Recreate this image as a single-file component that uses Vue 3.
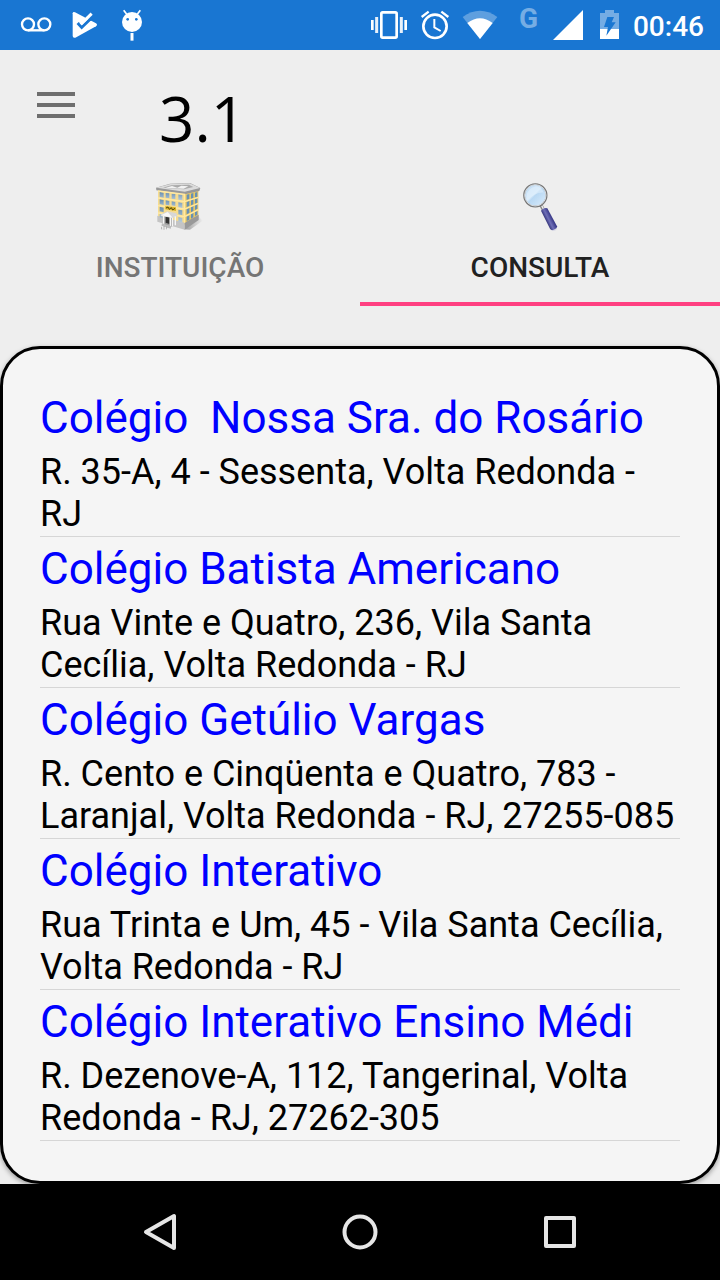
<script setup>
import { ref } from 'vue'

const active = ref('consulta')

const schools = [
  { name: 'Colégio  Nossa Sra. do Rosário', address: 'R. 35-A, 4 - Sessenta, Volta Redonda - RJ' },
  { name: 'Colégio Batista Americano', address: 'Rua Vinte e Quatro, 236, Vila Santa Cecília, Volta Redonda - RJ' },
  { name: 'Colégio Getúlio Vargas', address: 'R. Cento e Cinqüenta e Quatro, 783 - Laranjal, Volta Redonda - RJ, 27255-085' },
  { name: 'Colégio Interativo', address: 'Rua Trinta e Um, 45 - Vila Santa Cecília, Volta Redonda - RJ' },
  { name: 'Colégio Interativo Ensino Médi', address: 'R. Dezenove-A, 112, Tangerinal, Volta Redonda - RJ, 27262-305' },
]
</script>

<template>
  <div class="screen">
    <div class="status">
      <div class="notices">
        <svg width="32" height="50" viewBox="60 0 96 150" fill="none" stroke="#fff" stroke-width="7">
          <circle cx="84" cy="73" r="18" />
          <circle cx="133" cy="73" r="18" />
          <path d="M84 91H133" />
        </svg>
        <svg width="26" height="50" viewBox="216 0 78 150">
          <path d="M218 40Q219 34 225 37L288 70Q294 75 288 79L226 113Q218 115 218 107Z" fill="#fff" />
          <path d="M253 50L264 40L292 48L272 63Z" fill="#1976d2" />
          <path d="M233 69L245 82L275 53" fill="none" stroke="#1976d2" stroke-width="9" />
          <path d="M242 73L275 41" fill="none" stroke="#fff" stroke-width="9" />
        </svg>
        <svg width="28" height="50" viewBox="354 0 84 150">
          <circle cx="396" cy="66" r="30" fill="#fff" />
          <path d="M371 31L382 45M421 31L410 45" stroke="#fff" stroke-width="5" />
          <path d="M396 99V122" stroke="#fff" stroke-width="9" />
          <circle cx="383" cy="58" r="4" fill="#1976d2" />
          <circle cx="409" cy="58" r="4" fill="#1976d2" />
        </svg>
      </div>
      <div class="system">
        <svg width="37" height="50" viewBox="33 0 111 150">
          <rect x="64" y="37" width="46" height="76" rx="4" fill="none" stroke="#fff" stroke-width="8" />
          <path d="M37 60V90M137 60V90" stroke="#fff" stroke-width="8" />
          <path d="M50 51V99M124 51V99" stroke="#fff" stroke-width="9" opacity=".9" />
        </svg>
        <svg width="30" height="50" viewBox="180 0 90 150" fill="none" stroke="#fff">
          <circle cx="225" cy="79" r="35" stroke-width="8" />
          <path d="M223 57V82L242 93" stroke-width="6" />
          <path d="M185 51L206 35M265 51L244 35" stroke-width="7" />
        </svg>
        <svg width="36" height="50" viewBox="306 0 108 150" fill="#fff">
          <path d="M308 51Q360 14 412 51L360 117Z" opacity=".3" />
          <path d="M322 69Q360 41 398 69L360 117Z" />
        </svg>
        <span class="network">G</span>
        <svg width="30" height="50" viewBox="39 0 90 150"><path d="M39 120L129 30V120Z" fill="#fff" /></svg>
        <svg width="26" height="50" viewBox="165 0 78 150">
          <path d="M180 39H195V30H222V39H237V87H180Z" fill="#fff" opacity=".4" />
          <path d="M180 87H237V117H180Z" fill="#fff" />
          <path d="M202 51H222L215 67H227L199 107L204 81H192Z" fill="#1976d2" />
        </svg>
        <time class="clock">00:46</time>
      </div>
    </div>

    <header class="bar">
      <button class="menu" type="button" aria-label="Menu"><i></i><i></i><i></i></button>
      <h1>3.1</h1>
    </header>

    <nav class="tabs">
      <button type="button" class="tab" :class="{ on: active === 'instituicao' }" @click="active = 'instituicao'">
        <svg width="80" height="70" viewBox="0 0 240 210">
          <defs>
            <linearGradient id="shade"><stop offset="0" stop-color="#999" /><stop offset="1" stop-color="#ededed" /></linearGradient>
            <linearGradient id="glass" x2="0" y2="1"><stop offset="0" stop-color="#688eaf" /><stop offset="1" stop-color="#b6cbdc" /></linearGradient>
          </defs>
          <path d="M132 178L176 140L188 152L150 179Z" fill="url(#shade)" />
          <path d="M54 60L134 70V165L54 143Z" fill="#f6dc90" />
          <path d="M134 70L175 62V142L134 166Z" fill="#e8c866" />
          <path d="M52 137L134 158V179L52 155Z" fill="#c4c4c4" />
          <path d="M134 158L176 134V150L134 179Z" fill="#999" />
          <path d="M48 53L90 41L150 39L181 54L178 63L134 73L49 61Z" fill="#989898" />
          <path d="M49 53L91 42L149 40L180 54L134 65Z" fill="#dcdcdc" />
          <path d="M69 53L94 46L147 44L160 51L132 58Z" fill="#aaa" />
          <path d="M76 53L96 48L112 53L124 47L145 49L131 56Z" fill="#f2f2f2" />
          <g fill="url(#glass)">
            <path d="M59 66L71 68V83L59 81ZM77 69L88 70V85L77 83ZM95 71L106 72V88L95 86ZM115 73L127 75V91L115 89Z" />
            <path d="M59 88L71 90V105L59 102ZM77 91L88 93V106L77 104ZM95 94L106 96V108L95 106ZM115 97L127 99V115L115 112Z" />
            <path d="M59 110L71 113V127L59 124ZM115 119L127 121V136L115 133ZM59 131L68 134V145L59 142ZM115 141L127 144V158L115 155Z" />
          </g>
          <g fill="#6791b4">
            <path d="M140 74L148 72V87L140 89ZM153 71L160 69V84L153 86ZM165 68L172 66V80L165 82Z" />
            <path d="M140 96L148 93V108L140 111ZM153 91L160 88V103L153 106ZM165 87L172 84V98L165 101Z" />
            <path d="M140 118L148 114V129L140 133ZM153 112L160 108V123L153 127ZM165 106L172 102V116L165 120Z" />
            <path d="M140 140L148 136V149L140 153ZM153 133L160 129V142L153 146ZM165 126L172 122V134L165 138Z" />
          </g>
          <path d="M54 63L134 73V158M54 84L134 95L175 82M54 107L134 117L175 100M54 129L134 140L175 119" fill="none" stroke="#ffe9a3" stroke-width="4" />
          <path d="M76 108L108 112V123L76 118Z" fill="#d6b226" />
          <path d="M78 114L84 111L88 118L94 113L98 120L105 115" fill="none" stroke="#55450c" stroke-width="3" />
          <path d="M69 137L99 142V171L69 164Z" fill="#999" />
          <path d="M77 140L88 142V162L77 158Z" fill="#333" />
          <path d="M61 134L82 124L109 130L112 139L98 144L63 138Z" fill="#d7d7d7" />
          <path d="M63 136L83 126L98 143Z" fill="#f8f8f8" />
          <path d="M71 138V164M91 142V170M97 143V170M106 139V166" stroke="#f5f5f5" stroke-width="4" />
          <path d="M66 160L93 168V176L64 169Z" fill="#bbb" />
          <path d="M63 167L80 172V179L63 175Z" fill="#f8f8f8" />
          <path d="M65 170V178M72 168V179M79 170V178" stroke="#888" stroke-width="2" />
        </svg>
        <span>INSTITUIÇÃO</span>
      </button>
      <button type="button" class="tab" :class="{ on: active === 'consulta' }" @click="active = 'consulta'">
        <svg width="80" height="70" viewBox="0 0 240 210">
          <defs>
            <linearGradient id="lens" x2="1" y2="1"><stop offset="0" stop-color="#bcd9f2" /><stop offset=".45" stop-color="#d3e8fa" /><stop offset=".5" stop-color="#b9d8f3" /><stop offset="1" stop-color="#dceefc" /></linearGradient>
            <linearGradient id="handle" gradientUnits="userSpaceOnUse" x1="134" y1="151" x2="158" y2="139"><stop offset="0" stop-color="#25256b" /><stop offset=".45" stop-color="#7070b8" /><stop offset="1" stop-color="#28287a" /></linearGradient>
          </defs>
          <path d="M123 106L131 121" stroke="#888" stroke-width="10" />
          <path d="M125 107L131 118" stroke="#eee" stroke-width="4" />
          <path d="M123 122Q130 112 142 115L171 169Q172 178 158 181Q153 181 150 176Z" fill="url(#handle)" />
          <path d="M154 179Q165 182 170 172L169 180L160 183Z" fill="#d7d7e5" />
          <circle cx="106" cy="76" r="34" fill="url(#lens)" stroke="#777" stroke-width="5" />
          <circle cx="106" cy="76" r="32" fill="none" stroke="#d8dce0" stroke-width="3" />
          <path d="M80 80Q82 53 108 49Q126 51 131 68Q105 66 80 94Z" fill="#e8f4fd" opacity=".5" />
        </svg>
        <span>CONSULTA</span>
      </button>
    </nav>

    <main class="card">
      <ul>
        <li v-for="s in schools" :key="s.name">
          <h2>{{ s.name }}</h2>
          <p>{{ s.address }}</p>
        </li>
      </ul>
    </main>

    <footer class="keys">
      <button type="button" aria-label="Voltar">
        <svg width="40" height="40" viewBox="0 0 40 40"><path d="M34 4V36L6 20Z" /></svg>
      </button>
      <button type="button" aria-label="Início">
        <svg width="40" height="40" viewBox="0 0 40 40"><circle cx="20" cy="20" r="15.500" /></svg>
      </button>
      <button type="button" aria-label="Recentes">
        <svg width="40" height="40" viewBox="0 0 40 40"><rect x="6" y="6" width="28" height="28" /></svg>
      </button>
    </footer>
  </div>
</template>

<style>
body {
  margin: 0;
  background: #eee;
}
</style>

<style scoped>
.screen {
  display: flex;
  flex-direction: column;
  min-height: 100vh;
  background: #eee;
  color: #000;
  font-family: Roboto, "Liberation Sans", sans-serif;
}
svg {
  display: block;
  flex: none;
}
button {
  border: 0;
  padding: 0;
  background: none;
  font: inherit;
  cursor: pointer;
}
.status {
  display: flex;
  justify-content: space-between;
  height: 50px;
  padding: 0 16px 0 20px;
  background: #1976d2;
  color: #fff;
}
.notices {
  display: flex;
  gap: 20px;
}
.system {
  display: flex;
  gap: 12px;
}
.network {
  width: 31px;
  padding-left: 9px;
  box-sizing: border-box;
  font-size: 28px;
  font-weight: 700;
  line-height: 38px;
  color: #75ade4;
}
.clock {
  font-size: 28px;
  font-weight: 500;
  line-height: 54px;
}
.bar {
  display: flex;
  align-items: flex-start;
  height: 112px;
  padding: 0 37px;
}
.menu {
  display: flex;
  flex-direction: column;
  gap: 7px;
  width: 38px;
  margin-top: 42px;
}
.menu i {
  width: 100%;
  height: 4px;
  background: #6e6e6e;
}
h1 {
  margin: 24px 0 0 84px;
  font-family: "Open Sans", "Noto Sans", sans-serif;
  font-size: 62px;
  font-weight: 400;
  line-height: 88px;
}
.tabs {
  display: grid;
  grid-template-columns: 1fr 1fr;
  margin-bottom: 40px;
}
.tab {
  display: flex;
  flex-direction: column;
  align-items: center;
  height: 144px;
  padding-top: 8px;
  box-sizing: border-box;
  border-bottom: 4px solid transparent;
  color: #757575;
  font-size: 28px;
  font-weight: 500;
  line-height: 36px;
}
.tab span {
  margin-top: 10px;
}
.tab.on {
  border-color: #ff4081;
  color: #212121;
}
.card {
  flex: 1;
  padding: 37px 37px 40px;
  border: 3px solid #000;
  border-radius: 40px;
  background: #f5f5f5;
  box-shadow: 0 2px 5px rgba(0, 0, 0, 0.35);
}
ul {
  margin: 0;
  padding: 0;
  list-style: none;
}
li {
  padding-bottom: 1px;
  border-bottom: 1px solid #d6d6d6;
}
h2 {
  margin: 0;
  padding: 6px 0 7px;
  overflow: hidden;
  color: #00f;
  font-size: 44px;
  font-weight: 400;
  line-height: 52px;
  white-space: pre;
}
p {
  margin: 0;
  font-size: 36px;
  line-height: 42px;
}
.keys {
  z-index: 1;
  display: flex;
  justify-content: center;
  gap: 160px;
  height: 96px;
  background: #000;
}
.keys svg {
  fill: none;
  stroke: #e6e6e6;
  stroke-width: 4;
  stroke-linejoin: round;
}
</style>
